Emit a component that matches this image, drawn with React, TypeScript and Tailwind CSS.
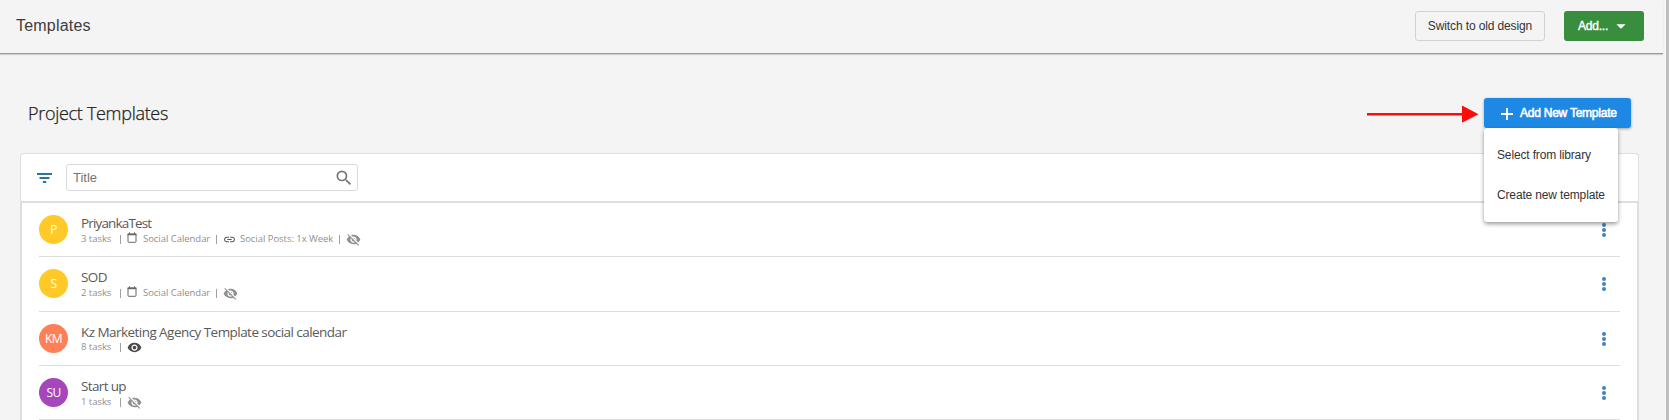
import React from "react";
import {
  MdLink,
  MdSearch,
  MdVisibility,
  MdVisibilityOff,
  MdArrowDropDown,
} from "react-icons/md";

type Template = {
  initials: string;
  color: string;
  title: string;
  titleStyle: string;
  tasks: number;
  calendar?: string;
  link?: string;
  visible: boolean;
  height: string;
};

const templates: Template[] = [
  { initials: "P", color: "bg-[#ffca28]", title: "PriyankaTest", titleStyle: "h-[17px] tracking-[-0.85px]", tasks: 3, calendar: "Social Calendar", link: "Social Posts: 1x Week", visible: false, height: "h-[54px]" },
  { initials: "S", color: "bg-[#ffca28]", title: "SOD", titleStyle: "h-[17px] tracking-[-0.6px]", tasks: 2, calendar: "Social Calendar", visible: false, height: "h-[55px]" },
  { initials: "KM", color: "bg-[#ff7f57]", title: "Kz Marketing Agency Template social calendar", titleStyle: "h-[16px] tracking-[-0.55px]", tasks: 8, visible: true, height: "h-[54px]" },
  { initials: "SU", color: "bg-[#a546bb]", title: "Start up", titleStyle: "h-[17px] tracking-[-0.65px]", tasks: 1, visible: false, height: "h-[54px]" },
];

function Bar() {
  return <span className="h-[9px] w-px shrink-0 bg-[#a0a0a0]" />;
}

function CalendarIcon() {
  return (
    <svg viewBox="0 0 10 11" className="mb-[3px] h-[11px] w-[10px] shrink-0" fill="none" stroke="#666">
      <path d="M1 2.2h8v7.3a.8.8 0 0 1-.8.8H1.800a.8.8 0 0 1-.8-.8z" />
      <path d="M.6 2.300h8.800" strokeWidth="1.800" />
      <path d="M2.500.3v1.500M7.500.3v1.500" />
    </svg>
  );
}

function Row({ t }: { t: Template }) {
  return (
    <div className={`flex shrink-0 items-start border-b border-[#dedede] ${t.height}`}>
      <div className={`mt-[12px] flex size-[29px] shrink-0 items-center justify-center rounded-full text-[12px] leading-none tracking-[-0.6px] text-white ${t.color}`}>
        {t.initials}
      </div>
      <div className="ml-[13px] grow pt-[11px]">
        <div className={`text-[13.5px] leading-[18px] whitespace-nowrap text-[#5a5a5a] ${t.titleStyle}`}>{t.title}</div>
        <div className="flex h-[16px] items-center text-[9.5px] leading-none tracking-[-0.04px] whitespace-nowrap text-[#8f8f8f]">
          <span className="w-[39px]">{t.tasks} tasks</span>
          <Bar />
          {t.calendar && (
            <>
              <span className="w-[6px]" />
              <CalendarIcon />
              <span className="ml-[6px] w-[73px]">{t.calendar}</span>
              <Bar />
            </>
          )}
          {t.link && (
            <>
              <MdLink className="ml-[6px] size-[13px] shrink-0 text-[#555]" />
              <span className="ml-[4px] w-[99px]">{t.link}</span>
              <Bar />
            </>
          )}
          {t.visible ? (
            <MdVisibility className="ml-[6px] size-[15px] shrink-0 text-[#4a4a4a]" />
          ) : (
            <MdVisibilityOff className="ml-[6px] size-[15px] shrink-0 text-[#8f8f8f]" />
          )}
        </div>
      </div>
      <svg viewBox="0 0 6 16" className="mt-[19px] mr-[13px] h-[16px] w-[6px] shrink-0" fill="#4384c0">
        <circle cx="3" cy="3" r="2" />
        <circle cx="3" cy="8" r="2" />
        <circle cx="3" cy="13" r="2" />
      </svg>
    </div>
  );
}

export default function App() {
  return (
    <div className="flex h-[420px] w-[1669px] overflow-hidden bg-[#f4f4f4] font-['Liberation_Sans',sans-serif]">
      <div className="flex w-[1666px] shrink-0 flex-col">
        <header className="mr-[3px] flex h-[54px] shrink-0 items-start border-b border-[#999] pt-[11px] pl-4 shadow-[0_1px_1px_rgba(0,0,0,0.14)]">
          <h1 className="grow pt-[2px] text-[16px] leading-[26px] tracking-[0.2px] text-[#3c3c3c]">Templates</h1>
          <button className="h-[30px] w-[130px] rounded-[3px] border border-[#d2d2d2] text-[12px] tracking-[-0.12px] whitespace-nowrap text-[#333]">
            Switch to old design
          </button>
          <button className="mr-[19px] ml-[19px] flex h-[30px] w-[80px] items-center rounded-[3px] bg-[#388e3c] pl-[12px] text-[12px] text-white">
            <span className="w-[34px] tracking-[-0.2px] [-webkit-text-stroke:0.4px_white]">Add...</span>
            <MdArrowDropDown className="size-[22px]" />
          </button>
        </header>

        <div className="flex h-[99px] shrink-0 items-start pt-[44px] pr-[35px] pl-[28px]">
          <h2 className="grow pt-[2px] font-['Open_Sans',sans-serif] text-[18px] leading-[26px] font-light tracking-[-0.3px] text-[#222] [-webkit-text-stroke:0.25px_#222]">
            Project Templates
          </h2>
          <svg viewBox="0 0 112 18" className="mt-[7px] mr-[5px] h-[18px] w-[112px]" fill="#ff0a0a">
            <path d="M0 8h96v2.500H0zM95 .5l16.500 8.700L95 17.800z" />
          </svg>
          <div className="relative z-10">
            <button className="relative flex h-[30px] w-[147px] items-center rounded-[3px] bg-[#1e88e5] pl-[17px] text-white shadow-[0_1px_3px_rgba(0,0,0,0.35)]">
              <svg viewBox="0 0 12 12" className="mt-[2px] size-[12px]" stroke="white" strokeWidth="1.8">
                <path d="M0 6h12M6 0v12" />
              </svg>
              <span className="ml-[7px] text-[12px] tracking-[-0.24px] whitespace-nowrap [-webkit-text-stroke:0.55px_white]">Add New Template</span>
            </button>
            <div className="absolute top-[30px] left-0 z-10 flex h-[94px] w-[134px] flex-col rounded-[3px] bg-white pt-[7px] pl-[13px] text-[12px] tracking-[-0.15px] whitespace-nowrap text-[#333] shadow-[0_2px_4px_rgba(0,0,0,0.4)]">
              <span className="h-[40px] leading-[40px]">Select from library</span>
              <span className="h-[40px] leading-[40px]">Create new template</span>
            </div>
          </div>
        </div>

        <main className="ml-[20px] flex h-[267px] w-[1619px] shrink-0 flex-col overflow-hidden rounded-t-[4px] border border-b-0 border-[#dedede] bg-white">
          <div className="flex h-[49px] shrink-0 items-center border-b-2 border-[#dedede] pl-[16px]">
            <svg viewBox="0 0 15 10" className="h-[10px] w-[15px]" fill="#30739f">
              <path d="M0 0h15v2H0zM2.500 4h10v2h-10zM5.800 8h3.500v2H5.800z" />
            </svg>
            <label className="ml-[14px] flex h-[27px] w-[292px] items-center rounded-[3px] border border-[#dadada] pr-[3px] pl-[6px] text-[13px] text-[#757575]">
              <span className="grow">Title</span>
              <MdSearch className="size-[20px] text-[#777]" />
            </label>
          </div>
          <div className="flex grow flex-col overflow-hidden border-x border-[#dedede] pr-[17px] pl-[17px] font-['Open_Sans',sans-serif]">
            {templates.map((t) => (
              <Row key={t.title} t={t} />
            ))}
          </div>
        </main>
      </div>
      <div className="w-[3px] shrink-0 bg-[#bfbfbf]" />
    </div>
  );
}
